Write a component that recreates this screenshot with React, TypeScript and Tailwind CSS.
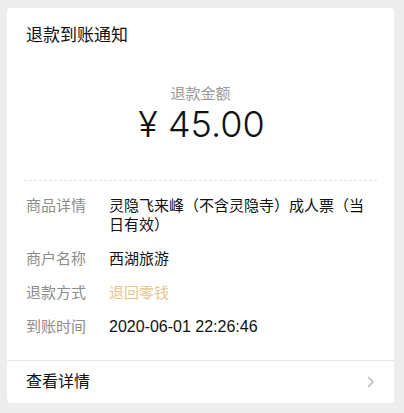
import React from "react";

const cjk = { fontFamily: '"Liberation Sans", "Noto Sans CJK SC", sans-serif' };

function Row({ label, children, valueClass = "text-[#111111]" }: { label: string; children: React.ReactNode; valueClass?: string }) {
  return (
    <div className="flex">
      <div className="w-[83px] shrink-0 text-[15px] leading-[19px] text-[#8c8c8c]">{label}</div>
      <div className={`w-[269px] text-[15px] leading-[19px] ${valueClass}`}>{children}</div>
    </div>
  );
}

export default function App() {
  return (
    <div className="w-[404px] h-[413px] bg-[#ededed] pt-[8px] pl-[7px]" style={cjk}>
      <div className="w-[387px] h-[395px] bg-white rounded-[4px] flex flex-col">
        <div className="pt-[16px] px-[19px] text-[17px] leading-[24px] text-[#111111]">退款到账通知</div>
        <div className="mt-[36px] flex flex-col items-center">
          <div className="text-[15px] leading-[20px] text-[#9a9a9a]">退款金额</div>
          <div
            className="text-[36px] leading-[40px] font-light text-[#111111] pl-[2px]"
            style={{ fontFamily: 'Inter, "Liberation Sans", sans-serif' }}
          >
            ¥ 45.00
          </div>
        </div>
        <div className="mt-[36px] mx-[17px] border-t border-dashed border-[#e3e3e3]" />
        <div className="pt-[15px] px-[19px] flex flex-col gap-[15px]">
          <Row label="商品详情">灵隐飞来峰（不含灵隐寺）成人票（当日有效）</Row>
          <Row label="商户名称">西湖旅游</Row>
          <Row label="退款方式" valueClass="text-[#e6c58c]">退回零钱</Row>
          <Row label="到账时间">
            <span className="text-[16px]">2020-06-01 22:26:46</span>
          </Row>
        </div>
        <div className="mt-auto h-[43px] border-t border-[#e6e6e6] flex items-center justify-between px-[19px]">
          <span className="text-[16px] leading-[20px] text-[#111111]">查看详情</span>
          <svg width="8" height="12" viewBox="0 0 8 12" fill="none">
            <path d="M1.5 1.5 L6 6 L1.5 10.5" stroke="#c7c7c7" strokeWidth="1.8" strokeLinecap="round" strokeLinejoin="round" />
          </svg>
        </div>
      </div>
    </div>
  );
}
